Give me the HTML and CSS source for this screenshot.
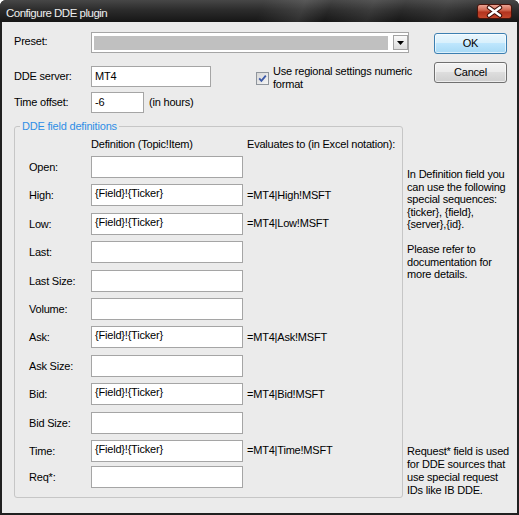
FILE: index.html
```html
<!DOCTYPE html>
<html>
<head>
<meta charset="utf-8">
<link rel="stylesheet" href="styles.css">
</head>
<body>
<div class="window">
  <div class="titlebar">
    <span class="title">Configure DDE plugin</span>
    <div class="close">
      <svg width="35" height="15" viewBox="0 0 35 15">
        <path d="M12 3.5 L23 11.5 M23 3.5 L12 11.5" stroke="#3a0c05" stroke-width="4.6" stroke-linecap="round" fill="none"/>
        <path d="M12 3.5 L23 11.5 M23 3.5 L12 11.5" stroke="#ffffff" stroke-width="2.4" stroke-linecap="round" fill="none"/>
      </svg>
    </div>
  </div>
  <div class="client">
    <div class="top">
      <div class="form">
        <div class="frow r1">
          <span class="lbl">Preset:</span>
          <div class="combo">
            <div class="combo-fill"></div>
            <div class="combo-btn">
              <svg width="7" height="4" viewBox="0 0 7 4"><path d="M0 0 H7 L3.5 4 Z" fill="#000"/></svg>
            </div>
          </div>
        </div>
        <div class="frow r2">
          <span class="lbl">DDE server:</span>
          <div class="field w-server">MT4</div>
          <div class="check">
            <svg width="13" height="13" viewBox="0 0 13 13">
              <defs>
                <linearGradient id="cbg" x1="0" y1="0" x2="1" y2="1">
                  <stop offset="0" stop-color="#d6d6d6"/>
                  <stop offset="1" stop-color="#f6f6f6"/>
                </linearGradient>
              </defs>
              <rect x="0.5" y="0.5" width="12" height="12" fill="url(#cbg)" stroke="#8f959c"/>
              <path d="M3.2 6.3 L5.4 8.8 L9.8 3.6" stroke="#3d5aa8" stroke-width="1.8" fill="none"/>
            </svg>
            <span class="check-text">Use regional settings numeric<br>format</span>
          </div>
        </div>
        <div class="frow r3">
          <span class="lbl">Time offset:</span>
          <div class="field w-offset">-6</div>
          <span class="hint">(in hours)</span>
        </div>
      </div>
      <div class="buttons">
        <div class="btn ok">OK</div>
        <div class="btn">Cancel</div>
      </div>
    </div>
    <div class="bottom">
      <div class="group">
        <span class="legend">DDE field definitions</span>
        <div class="ghead">
          <span class="glbl"></span>
          <span class="hcol">Definition (Topic!Item)</span>
          <span class="eval">Evaluates to (in Excel notation):</span>
        </div>
        <div class="rows">
          <div class="grow"><span class="glbl">Open:</span><div class="gfield"></div></div>
          <div class="grow"><span class="glbl">High:</span><div class="gfield">{Field}!{Ticker}</div><span class="eval">=MT4|High!MSFT</span></div>
          <div class="grow"><span class="glbl">Low:</span><div class="gfield">{Field}!{Ticker}</div><span class="eval">=MT4|Low!MSFT</span></div>
          <div class="grow"><span class="glbl">Last:</span><div class="gfield"></div></div>
          <div class="grow"><span class="glbl">Last Size:</span><div class="gfield"></div></div>
          <div class="grow"><span class="glbl">Volume:</span><div class="gfield"></div></div>
          <div class="grow"><span class="glbl">Ask:</span><div class="gfield">{Field}!{Ticker}</div><span class="eval">=MT4|Ask!MSFT</span></div>
          <div class="grow"><span class="glbl">Ask Size:</span><div class="gfield"></div></div>
          <div class="grow"><span class="glbl">Bid:</span><div class="gfield">{Field}!{Ticker}</div><span class="eval">=MT4|Bid!MSFT</span></div>
          <div class="grow"><span class="glbl">Bid Size:</span><div class="gfield"></div></div>
          <div class="grow"><span class="glbl">Time:</span><div class="gfield">{Field}!{Ticker}</div><span class="eval">=MT4|Time!MSFT</span></div>
          <div class="grow req"><span class="glbl">Req*:</span><div class="gfield"></div></div>
        </div>
      </div>
      <div class="side">
        <p class="p1">In Definition field you<br>can use the following<br>special sequences:<br>{ticker}, {field},<br>{server},{id}.<br><br>Please refer to<br>documentation for<br>more details.</p>
        <p class="p2">Request* field is used<br>for DDE sources that<br>use special request<br>IDs like IB DDE.</p>
      </div>
    </div>
  </div>
</div>
</body>
</html>
```

FILE: styles.css
```css
* { box-sizing: border-box; }
html, body { margin: 0; padding: 0; background: #ffffff; }
body {
  font-family: "Liberation Sans", Arial, sans-serif;
  font-size: 11px;
  line-height: 13px;
  letter-spacing: -0.2px;
  color: #000;
}
.window {
  width: 519px;
  height: 515px;
  display: flex;
  flex-direction: column;
  background: #202020;
  padding: 0 2px 2px;
  border-radius: 6px 6px 0 0;
  overflow: hidden;
}
.titlebar {
  flex: none;
  height: 22px;
  margin: 0 -2px;
  padding: 0 7px 0 6px;
  display: flex;
  justify-content: space-between;
  background:
    linear-gradient(112deg, rgba(255,255,255,0) 50%, rgba(255,255,255,0.10) 58%, rgba(255,255,255,0) 63%, rgba(255,255,255,0.08) 71%, rgba(255,255,255,0) 77%, rgba(255,255,255,0.06) 85%, rgba(255,255,255,0) 91%),
    linear-gradient(#474747 0%, #2c2c2c 45%, #161616 100%);
}
.title {
  font-family: "Liberation Sans", sans-serif;
  font-size: 11.5px;
  line-height: 14px;
  letter-spacing: -0.5px;
  margin-top: 5.5px;
  color: #eeeeee;
}
.close {
  width: 35px;
  height: 15px;
  margin-top: 4px;
  border: 1px solid #4a150c;
  border-radius: 3px;
  background: linear-gradient(#eaa393 0%, #d0664f 40%, #b3341f 55%, #c4472c 100%);
  display: flex;
  align-items: center;
  justify-content: center;
}
.close svg { display: block; margin: -1px; }
.client {
  flex: 1;
  background: #ebebeb;
  padding: 10px 10px 0 12px;
}
.top {
  display: flex;
  justify-content: space-between;
}
.form {
  display: flex;
  flex-direction: column;
}
.frow {
  display: flex;
  align-items: center;
  height: 21px;
}
.r2 { margin-top: 13px; }
.r3 { margin-top: 5px; }
.lbl { width: 77px; flex: none; }
.r1 .lbl { align-self: flex-start; margin-top: 3px; }
.combo {
  width: 318px;
  height: 21px;
  border: 1px solid #a5a5a5;
  background: #fff;
  display: flex;
  padding: 2px 0 2px 2px;
}
.combo-fill {
  flex: 1;
  height: 14px;
  margin-top: 1px;
  margin-right: 5px;
  background: #c0c0c0;
}
.combo-btn {
  width: 15px;
  height: 15px;
  border: 1px solid #a3a3a3;
  background: linear-gradient(#fafafa, #dcdcdc);
  display: flex;
  align-items: center;
  justify-content: center;
}
.combo-btn svg { display: block; }
.field {
  height: 21px;
  background: #fff;
  border: 1px solid #a5a5a5;
  padding: 3px 3px 0;
  white-space: nowrap;
}
.w-server { width: 120px; }
.w-offset { width: 53px; }
.hint { margin-left: 5px; }
.check {
  display: flex;
  align-items: center;
  gap: 4px;
  margin-left: 45px;
  align-self: flex-start;
  margin-top: -1px;
}
.check svg { display: block; flex: none; }
.check-text { white-space: nowrap; }
.buttons {
  display: flex;
  flex-direction: column;
  gap: 8px;
  margin-top: 1px;
}
.btn {
  width: 73px;
  height: 21px;
  border: 1px solid #707070;
  border-radius: 3px;
  display: flex;
  align-items: center;
  justify-content: center;
  background: linear-gradient(#f3f3f3 0%, #ebebeb 45%, #dddddd 50%, #cfcfcf 100%);
  box-shadow: inset 0 0 0 1px rgba(255,255,255,0.6);
}
.btn.ok {
  border-color: #3c7fb1;
  background: linear-gradient(#eaf6fd 0%, #d9f0fc 45%, #bee6fd 50%, #a7d9f5 100%);
}
.bottom {
  display: flex;
  margin-top: 13px;
  height: 372px;
}
.group {
  position: relative;
  flex: none;
  width: 389px;
  height: 372px;
  border: 1px solid #c6c6c6;
  border-radius: 3px;
  padding: 10.6px 0 0 14px;
}
.legend {
  position: absolute;
  left: 5px;
  top: -7px;
  padding: 0 2px;
  background: #ebebeb;
  color: #2f8ee6;
  white-space: nowrap;
}
.ghead {
  display: flex;
  margin-bottom: 5.4px;
  white-space: nowrap;
}
.glbl { width: 62px; flex: none; white-space: nowrap; }
.hcol { width: 152px; flex: none; }
.eval { margin-left: 4px; white-space: nowrap; }
.rows {
  display: flex;
  flex-direction: column;
  gap: 6.4px;
}
.grow {
  display: flex;
  align-items: center;
  height: 22px;
}
.grow .glbl { margin-top: 1px; }
.grow.req { margin-top: -2.4px; }
.gfield {
  width: 152px;
  height: 22px;
  flex: none;
  background: #fff;
  border: 1px solid #a5a5a5;
  padding: 2px 3px 0;
  white-space: nowrap;
}
.side {
  margin-left: 4px;
  display: flex;
  flex-direction: column;
  justify-content: space-between;
  padding: 42px 0 1.4px;
  white-space: nowrap;
}
.side p { margin: 0; }
.side .p1 { line-height: 12.5px; }
```
